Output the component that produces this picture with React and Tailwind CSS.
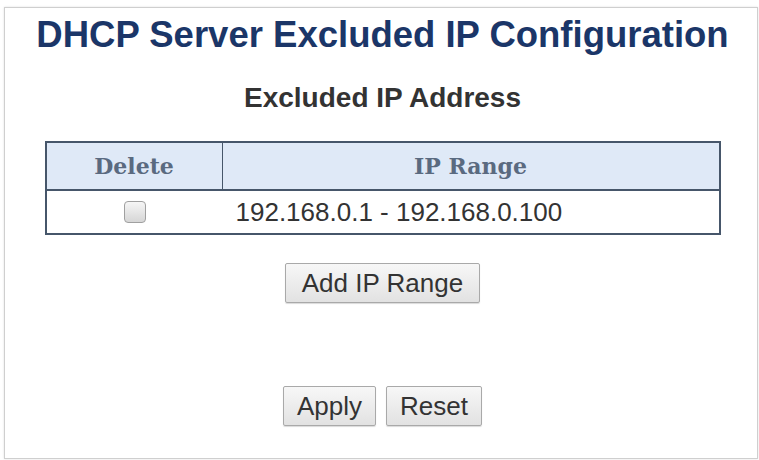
export default function App() {
  const btn =
    "h-[40px] border border-[#a9a9a9] rounded-[2px] bg-gradient-to-b from-[#f7f7f7] to-[#e2e2e2] text-[26px] leading-none text-[#333] shadow-[0_1px_1px_rgba(0,0,0,0.15)]";
  return (
    <div className="w-[759px] h-[460px] bg-white pt-[7px] pl-[4px] font-['Liberation_Sans',Arial,sans-serif]">
      <div className="w-[754px] h-[452px] border border-[#cfcfcf] shadow-[0_0_2px_rgba(0,0,0,0.12)] flex flex-col items-center pl-[3px]">
        <h1 className="mt-[9px] text-[36.5px] leading-[36px] font-bold text-[#1b3668]">
          DHCP Server Excluded IP Configuration
        </h1>
        <h2 className="mt-[31px] text-[28px] leading-[28px] font-bold text-[#333]">
          Excluded IP Address
        </h2>
        <div className="mt-[29px] w-[676px] border-2 border-[#46566a]">
          <div className="grid grid-cols-[176px_1fr] bg-[#dfe9f7] border-b-2 border-[#46566a] h-[48px] font-['DejaVu_Serif',serif] font-bold text-[22px] text-[#5a6a80]">
            <div className="flex items-center justify-center border-r border-[#46566a]">Delete</div>
            <div className="flex items-center justify-center">IP Range</div>
          </div>
          <div className="grid grid-cols-[176px_1fr] h-[42px] bg-white">
            <div className="flex items-center justify-center">
              <div className="w-[22px] h-[22px] rounded-[4px] border border-[#a0a0a0] bg-gradient-to-b from-[#f6f6f6] to-[#d6d6d6]" />
            </div>
            <div className="flex items-center pl-[13px] text-[26px] text-[#333]">
              192.168.0.1 - 192.168.0.100
            </div>
          </div>
        </div>
        <button className={"mt-[28px] px-[16px] " + btn}>Add IP Range</button>
        <div className="mt-[83px] flex gap-[10px]">
          <button className={"px-[13px] " + btn}>Apply</button>
          <button className={"px-[13px] " + btn}>Reset</button>
        </div>
      </div>
    </div>
  );
}
